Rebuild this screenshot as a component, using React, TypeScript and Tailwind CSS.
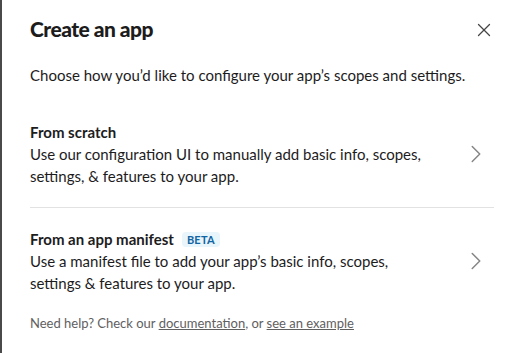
import { ChevronRight, X } from 'lucide-react'

function Option({ title, badge, text }: { title: string; badge?: string; text: string }) {
    return (
        <button className='w-full flex items-center py-5 text-left'>
            <div className='max-w-[402px]'>
                <div className='flex items-center gap-2'>
                    <strong className='font-bold text-[15px] leading-[22px] text-[#1d1c1d]'>{title}</strong>
                    {badge && (
                        <span className='px-[5px] rounded bg-[#e8f5fa] text-[#1264a3] text-[11px] leading-[15px] font-bold tracking-[0.02em]'>
                            {badge}
                        </span>
                    )}
                </div>
                <p className='text-[15px] leading-[22px] text-[#1d1c1d]'>{text}</p>
            </div>
            <ChevronRight size={30} strokeWidth={1.2} className='ml-auto mr-[3px] text-[#868686]' />
        </button>
    )
}

function App() {
    return (
        <div className='flex min-h-[353px] bg-[#4a4a4a] font-["Lato","Liberation_Sans",sans-serif]'>
            <div className='ml-[2px] flex-1 bg-white pl-[28px] pr-[22px]'>
                <div className='flex items-center justify-between pt-[10px]'>
                    <h1 className='text-[21px] leading-[30px] font-black text-[#1d1c1d] tracking-[-0.025em]'>Create an app</h1>
                    <button className='w-9 h-9 flex items-center justify-center -mr-[8px] mt-[2px] text-[#454545]'>
                        <X size={22} strokeWidth={1.4} />
                    </button>
                </div>

                <p className='mt-[16px] text-[15px] leading-[22px] text-[#1d1c1d]'>
                    Choose how you’d like to configure your app’s scopes and settings.
                </p>

                <div className='mt-[15px]'>
                    <Option
                        title='From scratch'
                        text='Use our configuration UI to manually add basic info, scopes, settings, & features to your app.'
                    />
                    <div className='h-px bg-[#e2e2e2]' />
                    <Option
                        title='From an app manifest'
                        badge='BETA'
                        text='Use a manifest file to add your app’s basic info, scopes, settings & features to your app.'
                    />
                </div>

                <p className='text-[13px] leading-[18px] text-[#616061]'>
                    Need help? Check our <a href='' className='underline'>documentation</a>, or{' '}
                    <a href='' className='underline'>see an example</a>
                </p>
            </div>
        </div>
    )
}

export default App;
